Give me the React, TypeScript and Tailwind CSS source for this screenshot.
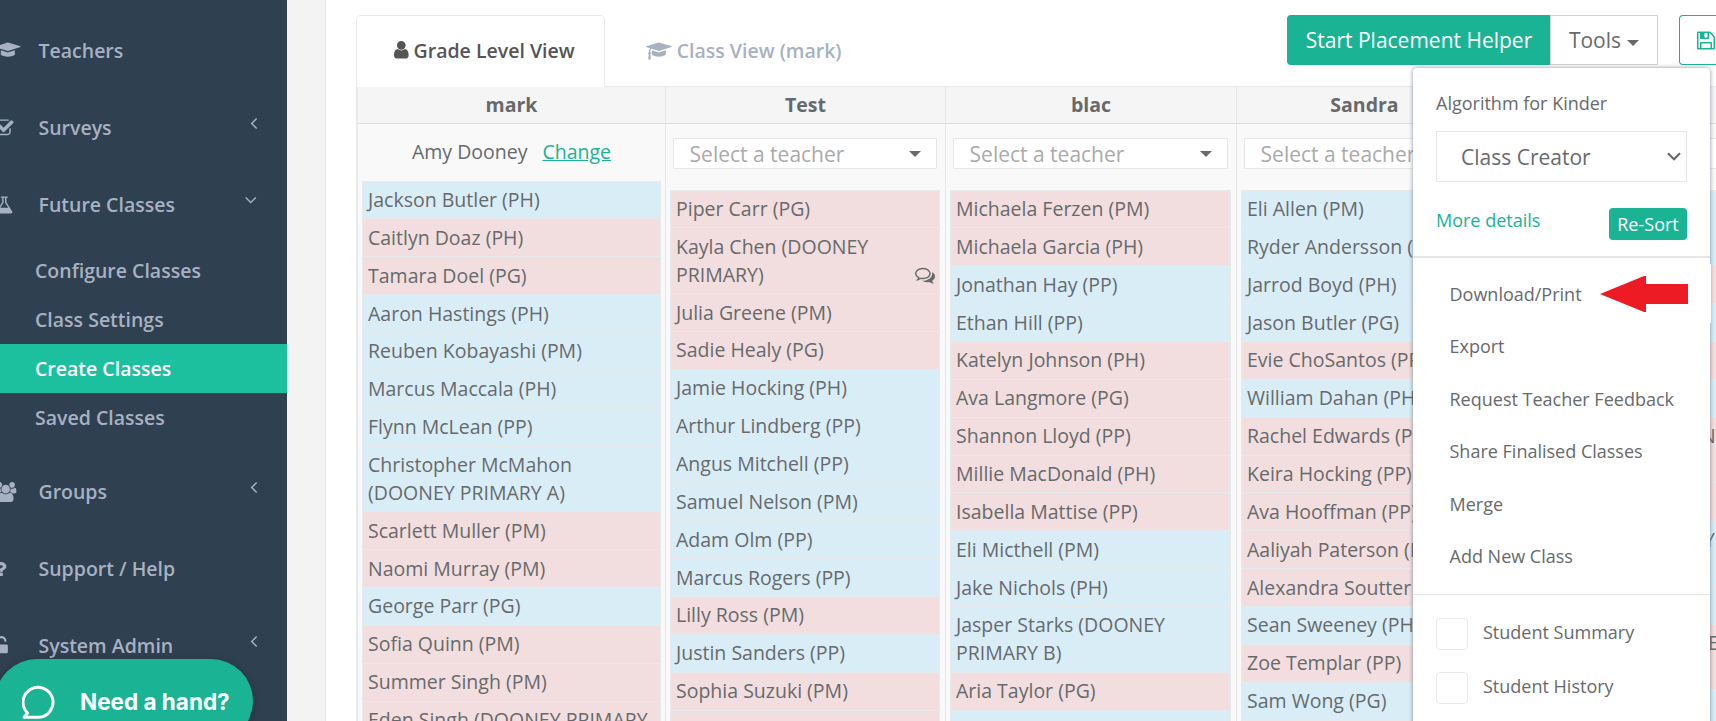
import React, { useState } from "react";
import clsx from "clsx";

type Student = { name: string; tone: "blue" | "pink"; comments?: boolean; indent?: string; tall?: boolean };

const blue = (name: string): Student => ({ name, tone: "blue" });
const pink = (name: string): Student => ({ name, tone: "pink" });

const icons = {
  user: {
    box: "256 0 1280 1792",
    d: "M1536 1399q0 109-62.5 187t-150.5 78h-854q-88 0-150.5-78t-62.5-187q0-85 8.5-160.5t31.5-152 58.5-131 94-89 134.5-34.5q131 128 313 128t313-128q76 0 134.5 34.5t94 89 58.5 131 31.5 152 8.5 160.5zm-256-887q0 159-112.5 271.5t-271.5 112.5-271.5-112.5-112.5-271.5 112.5-271.5 271.5-112.5 271.5 112.5 112.5 271.5z",
  },
  cap: {
    box: "0 0 2304 1792",
    d: "M1774 836l18 316q4 69-82 128t-235 93.5-323 34.5-323-34.5-235-93.5-82-128l18-316 574 181q22 7 48 7t48-7zm530-324q0 23-22 31l-1120 352q-4 1-10 1t-10-1l-652-206q-43 34-71 111.5t-34 178.5q63 36 63 109 0 69-58 107l58 433q2 14-8 25-9 11-24 11h-192q-15 0-24-11-10-11-8-25l58-433q-58-38-58-107 0-73 65-111 11-207 98-330l-333-104q-22-8-22-31t22-31l1120-352q4-1 10-1t10 1l1120 352q22 8 22 31z",
  },
  check: {
    box: "64 0 1664 1792",
    d: "M1472 930v318q0 119-84.5 203.5t-203.5 84.5h-832q-119 0-203.5-84.5t-84.5-203.5v-832q0-119 84.5-203.5t203.5-84.5h832q63 0 117 25 15 7 18 23 3 17-9 29l-49 49q-10 10-23 10-3 0-9-2-23-6-45-6h-832q-66 0-113 47t-47 113v832q0 66 47 113t113 47h832q66 0 113-47t47-113v-254q0-13 9-22l64-64q10-10 23-10 6 0 12 3 20 8 20 29zm231-489l-814 814q-24 24-57 24t-57-24l-430-430q-24-24-24-57t24-57l110-110q24-24 57-24t57 24l263 263 647-647q24-24 57-24t57 24l110 110q24 24 24 57t-24 57z",
  },
  flask: {
    box: "64 0 1664 1792",
    d: "M1591 1448q56 89 21.5 152.5t-140.5 63.5h-1152q-106 0-140.5-63.5t21.5-152.5l503-793v-399h-64q-26 0-45-19t-19-45 19-45 45-19h512q26 0 45 19t19 45-19 45-45 19h-64v399zm-779-725l-272 429h712l-272-429-20-31v-436h-128v436z",
  },
  group: {
    box: "0 0 1920 1792",
    d: "M593 896q-162 5-265 128h-134q-82 0-138-40.5t-56-118.5q0-353 124-353 6 0 43.5 21t97.5 42.5 119 21.5q67 0 133-23-5 37-5 66 0 139 81 256zm1071 637q0 120-73 189.5t-194 69.5h-874q-121 0-194-69.5t-73-189.5q0-53 3.5-103.5t14-109 26.5-108.5 43-97.5 62-81 85.5-53.5 111.5-20q10 0 43 21.5t73 48 107 48 135 21.5 135-21.5 107-48 73-48 43-21.5q61 0 111.5 20t85.5 53.5 62 81 43 97.5 26.5 108.5 14 109 3.5 103.5zm-1024-1277q0 106-75 181t-181 75-181-75-75-181 75-181 181-75 181 75 75 181zm704 384q0 159-112.5 271.5t-271.5 112.5-271.5-112.5-112.5-271.5 112.5-271.5 271.5-112.5 271.5 112.5 112.5 271.5zm576 225q0 78-56 118.5t-138 40.5h-134q-103-123-265-128 81-117 81-256 0-29-5-66 66 23 133 23 59 0 119-21.5t97.5-42.5 43.5-21q124 0 124 353zm-128-609q0 106-75 181t-181 75-181-75-75-181 75-181 181-75 181 75 75 181z",
  },
  question: {
    box: "384 0 1024 1792",
    d: "M1088 1256v240q0 16-12 28t-28 12h-240q-16 0-28-12t-12-28v-240q0-16 12-28t28-12h240q16 0 28 12t12 28zm316-600q0 54-15.5 101t-35 76.5-55 59.5-57.5 43.5-61 35.5q-41 23-68.5 65t-27.5 67q0 17-12 32.5t-28 15.5h-240q-15 0-25.5-18.5t-10.5-37.5v-45q0-83 65-156.5t143-108.5q59-27 84-56t25-76q0-42-46.5-74t-107.5-32q-65 0-108 29-35 25-107 115-13 16-31 16-12 0-25-8l-164-125q-13-10-15.5-25t5.5-28q160-266 464-266 80 0 161 31t146 83 106 127.5 41 158.5z",
  },
  unlock: {
    box: "320 0 1152 1792",
    d: "M1376 768q40 0 68 28t28 68v576q0 40-28 68t-68 28h-960q-40 0-68-28t-28-68v-576q0-40 28-68t68-28h32v-320q0-185 131.5-316.5t316.5-131.5 316.5 131.5 131.5 316.5q0 26-19 45t-45 19h-64q-26 0-45-19t-19-45q0-106-75-181t-181-75-181 75-75 181v320h736z",
  },
  save: {
    box: "128 0 1536 1792",
    d: "M512 1536h768v-384h-768v384zm896 0h128v-896q0-14-10-38.5t-20-34.5l-281-281q-10-10-34-20t-39-10v416q0 40-28 68t-68 28h-576q-40 0-68-28t-28-68v-416h-128v1280h128v-416q0-40 28-68t68-28h832q40 0 68 28t28 68v416zm-384-928v-320q0-13-9.5-22.5t-22.5-9.5h-192q-13 0-22.5 9.5t-9.5 22.5v320q0 13 9.5 22.5t22.5 9.5h192q13 0 22.5-9.5t9.5-22.5zm640 32v928q0 40-28 68t-68 28h-1344q-40 0-68-28t-28-68v-1344q0-40 28-68t68-28h928q40 0 88 20t76 48l280 280q28 28 48 76t20 88z",
  },
  comments: {
    box: "0 0 1792 1792",
    d: "M704 384q-153 0-286 52t-211.5 141-78.5 191q0 82 53 158t149 132l97 56-35 84q34-20 62-39l44-31 53 10q78 14 153 14 153 0 286-52t211.5-141 78.5-191-78.5-191-211.5-141-286-52zm0-128q191 0 353.5 68.5t256.5 186.5 94 257-94 257-256.5 186.5-353.5 68.5q-86 0-176-16-124 88-278 128-36 9-86 16h-3q-11 0-20.5-8t-11.5-21q-1-3-1-6.5t.5-6.5 2-6l2.5-5 3.5-5.5 4-5 4.5-5 4-4.5q5-6 23-25t26-29.5 22.5-29 25-38.5 20.5-44q-124-72-195-177t-71-224q0-139 94-257t256.5-186.5 353.5-68.5zm822 1169q10 24 20.5 44t25 38.5 22.5 29 26 29.5 23 25q1 1 4 4.5t4.5 5 4 5 3.5 5.5l2.5 5 2 6 .5 6.5-1 6.5q-3 14-13 22t-22 7q-50-7-86-16-154-40-278-128-90 16-176 16-271 0-472-132 58 4 88 4 161 0 309-45t264-129q125-92 192-212t67-254q0-77-23-152 129 71 204 178t75 230q0 120-71 224.5t-195 176.5z",
  },
  left: {
    box: "0 0 1792 1792",
    d: "M1203 544q0 13-10 23l-393 393 393 393q10 10 10 23t-10 23l-50 50q-10 10-23 10t-23-10l-466-466q-10-10-10-23t10-23l466-466q10-10 23-10t23 10l50 50q10 10 10 23z",
  },
  down: {
    box: "0 0 1792 1792",
    d: "M1395 736q0 13-10 23l-466 466q-10 10-23 10t-23-10l-466-466q-10-10-10-23t10-23l50-50q10-10 23-10t23 10l393 393 393-393q10-10 23-10t23 10l50 50q10 10 10 23z",
  },
};

function Icon({ name, className }: { name: keyof typeof icons; className?: string }) {
  return (
    <svg viewBox={icons[name].box} fill="currentColor" className={clsx("shrink-0 overflow-visible", className)}>
      <path d={icons[name].d} />
    </svg>
  );
}

function Caret({ className }: { className?: string }) {
  return (
    <svg viewBox="0 0 12 6" className={clsx("h-1.5 w-3 shrink-0", className)} fill="currentColor">
      <path d="M0 0h12L6 6z" />
    </svg>
  );
}

const columns: { title: string; width: string; teacher?: string; students: Student[] }[] = [
  {
    title: "mark",
    width: "w-[308px]",
    teacher: "Amy Dooney",
    students: [
      blue("Jackson Butler (PH)"),
      pink("Caitlyn Doaz (PH)"),
      pink("Tamara Doel (PG)"),
      blue("Aaron Hastings (PH)"),
      blue("Reuben Kobayashi (PM)"),
      blue("Marcus Maccala (PH)"),
      blue("Flynn McLean (PP)"),
      blue("Christopher McMahon (DOONEY PRIMARY A)"),
      pink("Scarlett Muller (PM)"),
      pink("Naomi Murray (PM)"),
      blue("George Parr (PG)"),
      pink("Sofia Quinn (PM)"),
      pink("Summer Singh (PM)"),
      pink("Eden Singh (DOONEY PRIMARY A)"),
    ],
  },
  {
    title: "Test",
    width: "w-[280px]",
    students: [
      pink("Piper Carr (PG)"),
      { name: "Kayla Chen (DOONEY PRIMARY)", tone: "pink", comments: true },
      pink("Julia Greene (PM)"),
      pink("Sadie Healy (PG)"),
      blue("Jamie Hocking (PH)"),
      blue("Arthur Lindberg (PP)"),
      blue("Angus Mitchell (PP)"),
      blue("Samuel Nelson (PM)"),
      blue("Adam Olm (PP)"),
      blue("Marcus Rogers (PP)"),
      pink("Lilly Ross (PM)"),
      blue("Justin Sanders (PP)"),
      pink("Sophia Suzuki (PM)"),
      pink(""),
    ],
  },
  {
    title: "blac",
    width: "w-[291px]",
    students: [
      pink("Michaela Ferzen (PM)"),
      pink("Michaela Garcia (PH)"),
      blue("Jonathan Hay (PP)"),
      blue("Ethan Hill (PP)"),
      pink("Katelyn Johnson (PH)"),
      pink("Ava Langmore (PG)"),
      pink("Shannon Lloyd (PP)"),
      pink("Millie MacDonald (PH)"),
      pink("Isabella Mattise (PP)"),
      blue("Eli Micthell (PM)"),
      blue("Jake Nichols (PH)"),
      blue("Jasper Starks (DOONEY PRIMARY B)"),
      pink("Aria Taylor (PG)"),
      blue(""),
    ],
  },
  {
    title: "Sandra",
    width: "w-[256px]",
    students: [
      blue("Eli Allen (PM)"),
      blue("Ryder Andersson (PG)"),
      blue("Jarrod Boyd (PH)"),
      blue("Jason Butler (PG)"),
      pink("Evie ChoSantos (PP)"),
      blue("William Dahan (PH)"),
      pink("Rachel Edwards (PP)"),
      pink("Keira Hocking (PP)"),
      pink("Ava Hooffman (PP)"),
      pink("Aaliyah Paterson (PH)"),
      pink("Alexandra Soutter"),
      blue("Sean Sweeney (PH)"),
      pink("Zoe Templar (PP)"),
      blue("Sam Wong (PG)"),
      blue(""),
    ],
  },
  {
    title: "",
    width: "w-[300px]",
    students: [
      blue(""),
      blue(""),
      pink(""),
      blue(""),
      pink(""),
      blue(""),
      { name: "N", tone: "pink", indent: "pl-[198px]", tall: true },
      pink(""),
      { name: "Y", tone: "blue", indent: "pl-[201px]", tall: true },
      blue(""),
      { name: "E", tone: "pink", indent: "pl-[205px]", tall: true },
      blue(""),
    ],
  },
];

function StudentRow({ student }: { student: Student }) {
  return (
    <li
      className={clsx(
        "-mt-px flex items-end border border-[#e7eaec] px-[5px] py-[4.5px]",
        student.tall ? "min-h-[66.71px]" : "min-h-[38.86px]",
        student.tone === "blue" ? "bg-[#d9edf7]" : "bg-[#f2dede]",
      )}
    >
      <span className={clsx("flex-1", student.tall && "self-start", student.indent)}>{student.name}</span>
      {student.comments && <Icon name="comments" className="-mr-px mb-1 size-5" />}
    </li>
  );
}

const mainItems: { label: string; icon: keyof typeof icons; iconClass: string; arrow?: "left" | "down" }[] = [
  { label: "Teachers", icon: "cap", iconClass: "h-5 w-[25.7px]" },
  { label: "Surveys", icon: "check", iconClass: "h-5 w-[18.6px]", arrow: "left" },
  { label: "Future Classes", icon: "flask", iconClass: "h-5 w-[18.6px]", arrow: "down" },
];

const lowerItems: typeof mainItems = [
  { label: "Groups", icon: "group", iconClass: "h-5 w-[21.4px]", arrow: "left" },
  { label: "Support / Help", icon: "question", iconClass: "h-5 w-[11.4px]" },
  { label: "System Admin", icon: "unlock", iconClass: "h-5 w-[12.9px]", arrow: "left" },
];

const subItems = ["Configure Classes", "Class Settings", "Create Classes", "Saved Classes"];

function NavItem({ item }: { item: (typeof mainItems)[number] }) {
  return (
    <a className="flex h-[77px] items-center">
      <span className="-ml-[5px] flex w-[43.5px]">
        <Icon name={item.icon} className={item.iconClass} />
      </span>
      <span>{item.label}</span>
      {item.arrow && (
        <Icon
          name={item.arrow}
          className={clsx("mb-2.5 ml-auto size-[19.5px]", item.arrow === "down" ? "mr-[27px]" : "mr-6")}
        />
      )}
    </a>
  );
}

function Sidebar() {
  return (
    <nav className="w-[287px] shrink-0 bg-[#2f4050] pt-3 font-semibold text-[#a7b1c2]">
      {mainItems.map((item) => (
        <NavItem key={item.label} item={item} />
      ))}
      <div className="mt-[3px] mb-[11px]">
        {subItems.map((label) => (
          <a
            key={label}
            className={clsx(
              "flex h-[49px] items-center pl-[35px]",
              label === "Create Classes" && "bg-[#1cc09f] text-white",
            )}
          >
            {label}
          </a>
        ))}
      </div>
      {lowerItems.map((item) => (
        <NavItem key={item.label} item={item} />
      ))}
    </nav>
  );
}

function ToolsMenu() {
  const [summary, setSummary] = useState(false);
  const [history, setHistory] = useState(false);
  const links = ["Download/Print", "Export", "Request Teacher Feedback", "Share Finalised Classes", "Merge", "Add New Class"];
  const options = [
    { label: "Student Summary", on: summary, set: setSummary },
    { label: "Student History", on: history, set: setHistory },
  ];

  return (
    <div className="absolute top-[68px] left-[1413px] h-[700px] w-[297px] rounded bg-white text-[18px] leading-[26px] shadow-[0_0_4.5px_rgba(86,96,117,0.7)]">
      <div className="px-[23px] pt-[22px]">
        <div>Algorithm for Kinder</div>
        <div className="mt-[15px] flex h-[51px] items-center justify-between border border-[#e5e6e7] pr-[5px] pl-6 text-[21px]">
          <span>Class Creator</span>
          <svg viewBox="0 0 14 9" className="h-[9px] w-3.5" fill="none" stroke="currentColor" strokeWidth="2.2">
            <path d="M1 1.2l6 6 6-6" />
          </svg>
        </div>
        <div className="mt-[26px] flex items-start justify-between">
          <a className="-mt-px text-[#1ab394]">More details</a>
          <button className="flex h-8 w-[78px] items-center justify-center rounded bg-[#1ab394] text-white">Re-Sort</button>
        </div>
      </div>
      <div className="mt-4 h-0.5 bg-[#e5e5e5]" />
      <ul className="pt-[9.8px]">
        {links.map((link) => (
          <li key={link} className="flex h-[52.4px] items-center pl-[36.5px]">
            {link}
          </li>
        ))}
      </ul>
      <div className="mt-[11.7px] h-px bg-[#e5e5e5]" />
      <div className="flex flex-col gap-[22px] px-[23px] pt-[23px]">
        {options.map((o) => (
          <label key={o.label} className="flex h-8 items-center" onClick={() => o.set(!o.on)}>
            <span className={clsx("size-8 rounded border border-[#e7eaec]", o.on ? "bg-[#1ab394]" : "bg-white")} />
            <span className="mb-[3px] ml-[15px]">{o.label}</span>
          </label>
        ))}
      </div>
      {/* callout arrow next to Download/Print */}
      <div className="absolute top-[196px] right-[-1px] h-[59px] w-px bg-white" />
      <svg viewBox="0 0 88 36" className="absolute top-[208px] left-[187px] h-9 w-[88px]" fill="#ed1c24">
        <path d="M0 18L44 0h2v8h42v20H46v8h-2z" />
      </svg>
    </div>
  );
}

export default function App() {
  return (
    <div className="relative flex h-[721px] w-[1716px] overflow-hidden bg-[#f3f3f4] font-['Open_Sans',sans-serif] text-[19.5px] leading-[27.86px] text-[#676a6c]">
      <Sidebar />

      <main className="ml-[38px] w-[1391px] shrink-0 border-l border-[#e7eaec] bg-white pl-[30px]">
        {/* Tabs and toolbar */}
        <div className="flex h-[87px] border-b border-[#e7eaec] pt-[15px] font-semibold">
          <div className="-mb-px flex w-[249px] items-center rounded-t-[5px] border border-b-0 border-[#e7eaec] bg-white pb-0.5 pl-[37px] text-[#555]">
            <Icon name="user" className="mr-[5px] mb-0.5 h-[21.5px] w-[14.6px]" />
            Grade Level View
          </div>
          <div className="flex w-[260px] items-center pt-px pl-[41px] text-[#a7b1c2]">
            <Icon name="cap" className="mr-[5px] h-5 w-[25.7px]" />
            Class View (mark)
          </div>
          <div className="ml-auto flex h-[50px] shrink-0 text-[21px] font-normal">
            <button className="flex w-[263px] items-center justify-center rounded-l bg-[#1ab394] pt-px pl-px text-white">
              Start Placement Helper
            </button>
            <button className="mr-[21px] flex w-[108px] items-center justify-center border border-[#d2d2d2] pt-0.5">
              Tools
              <Caret className="mt-[3px] ml-1.5" />
            </button>
            <button className="flex w-[37px] items-center rounded-l border border-r-0 border-[#1ab394] pl-[17px] text-[#1ab394]">
              <Icon name="save" className="h-[21px] w-[18px]" />
            </button>
          </div>
        </div>

        {/* Class columns */}
        <div className="flex border-l-2 border-[#e7eaec] bg-[#f9f9f9]">
          {columns.map((col, i) => (
            <section key={i} className={clsx("h-[640px] shrink-0 border-r border-[#e7e7e7]", col.width)}>
              <h3 className="flex h-[37px] items-center justify-center border-b border-[#dddddd] bg-[#f5f5f6] font-bold">
                {col.title}
              </h3>
              {col.teacher ? (
                <div className="flex h-[57px] items-center justify-center gap-[15px] pb-[2px]">
                  <span>{col.teacher}</span>
                  <a className="text-[#1ab394] underline">Change</a>
                </div>
              ) : (
                <div className="h-[66px] pt-3.5 pr-2 pl-[7px]">
                  <div className="flex h-[31px] items-center justify-between rounded-[1px] border border-[#e5e6e7] bg-white pt-0.5 pr-[15px] pl-[15.6px] text-[21px] text-[#aaa]">
                    <span>Select a teacher</span>
                    <Caret className="mb-0.5 text-[#676a6c]" />
                  </div>
                </div>
              )}
              <ul className={clsx("pt-[0.5px] pl-1", col.teacher ? "pr-1" : "pr-[5px]")}>
                {col.students.map((s, n) => (
                  <StudentRow key={n} student={s} />
                ))}
              </ul>
            </section>
          ))}
        </div>
      </main>

      <ToolsMenu />

      {/* Chat launcher */}
      <button className="absolute top-[659px] left-[-5px] flex h-[84px] w-[258px] items-center rounded-full bg-[#1ab394] pt-0.5 pl-[26.5px] font-[Inter,sans-serif] text-[22.5px] font-bold text-white shadow-[0_2px_10px_rgba(0,0,0,0.25)]">
        <svg viewBox="0 0 33 34" className="mr-[25.5px] h-[34px] w-[33px]" fill="none" stroke="currentColor" strokeWidth="3" strokeLinejoin="round">
          <path d="M2 32.3L5.500 28A15 15 0 1 1 16.500 32.300z" />
        </svg>
        Need a hand?
      </button>
    </div>
  );
}
